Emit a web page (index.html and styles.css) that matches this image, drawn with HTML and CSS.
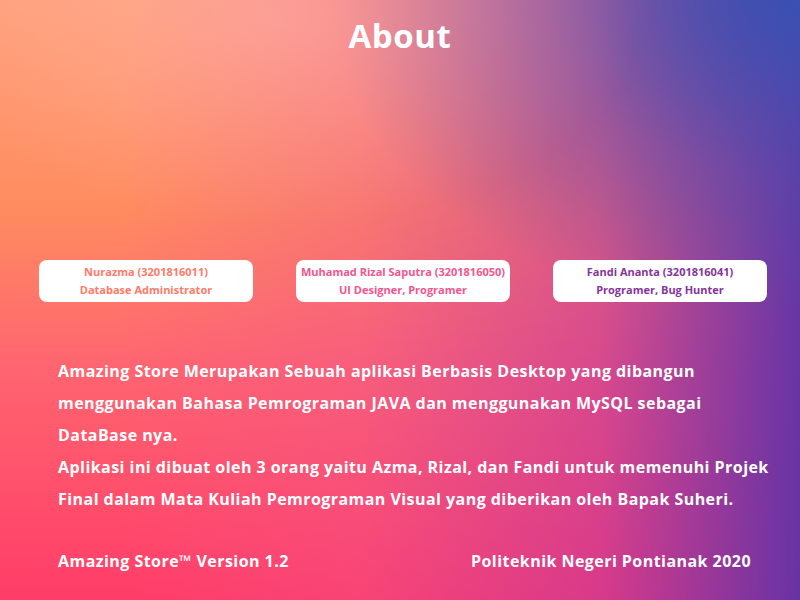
FILE: index.html
```html
<!DOCTYPE html>
<html>
<head>
<meta charset="utf-8">
<link rel="stylesheet" href="styles.css">
</head>
<body>
<div class="page">
  <h1 class="title">About</h1>
  <div class="cards">
    <div class="card card-coral"><div>Nurazma (3201816011)</div><div>Database Administrator</div></div>
    <div class="card card-pink"><div>Muhamad Rizal Saputra (3201816050)</div><div>UI Designer, Programer</div></div>
    <div class="card card-purple"><div>Fandi Ananta (3201816041)</div><div>Programer, Bug Hunter</div></div>
  </div>
  <div class="desc">
    <p>Amazing Store Merupakan Sebuah aplikasi Berbasis Desktop yang dibangun<br>menggunakan Bahasa Pemrograman JAVA dan menggunakan MySQL sebagai<br>DataBase nya.</p>
    <p>Aplikasi ini dibuat oleh 3 orang yaitu Azma, Rizal, dan Fandi untuk memenuhi Projek<br>Final dalam Mata Kuliah Pemrograman Visual yang diberikan oleh Bapak Suheri.</p>
  </div>
  <div class="footer">
    <span>Amazing Store™ Version 1.2</span>
    <span>Politeknik Negeri Pontianak 2020</span>
  </div>
</div>
</body>
</html>
```

FILE: styles.css
```css
html, body {
  margin: 0;
  padding: 0;
}
body {
  width: 800px;
  height: 600px;
  overflow: hidden;
  font-family: "Open Sans", "Noto Sans", sans-serif;
  color: #fff;
}
.page {
  width: 800px;
  height: 600px;
  box-sizing: border-box;
  display: flex;
  flex-direction: column;
  background:
    radial-gradient(ellipse 360px 200px at 35% 4%, rgba(255, 200, 205, 0.3), rgba(255, 200, 205, 0) 100%),
    radial-gradient(ellipse 470px 320px at 100% 0%, rgba(58, 80, 178, 1), rgba(70, 80, 175, 0.4) 55%, rgba(58, 80, 178, 0) 100%),
    linear-gradient(90deg, rgba(240, 80, 140, 0) 15%, rgba(235, 80, 145, 0.35) 45%, rgba(190, 55, 160, 0.6) 75%, rgba(95, 50, 168, 0.95) 100%),
    linear-gradient(180deg, #ffa07a 0%, #ff8c60 35%, #ff6670 60%, #ff3d68 100%);
}
.title {
  margin: 16px 0 0;
  text-align: center;
  font-size: 33px;
  font-weight: 700;
  line-height: 40px;
  letter-spacing: 0.6px;
}
.cards {
  margin-top: 204px;
  padding: 0 33px 0 39px;
  display: flex;
  justify-content: space-between;
}
.card {
  width: 214px;
  height: 42px;
  box-sizing: border-box;
  background: #fff;
  border-radius: 8px;
  display: flex;
  flex-direction: column;
  justify-content: center;
  align-items: center;
  font-size: 11px;
  font-weight: 700;
  line-height: 18px;
}
.card-coral { color: #ff7a68; }
.card-pink { color: #f2558e; }
.card-purple { color: #86349c; }
.desc {
  margin-top: 53px;
  padding: 0 0 0 58px;
  font-size: 16px;
  font-weight: 700;
  line-height: 32px;
  letter-spacing: 0.45px;
  white-space: nowrap;
}
.desc p {
  margin: 0;
}
.footer {
  margin-top: 34px;
  padding: 0 49px 0 58px;
  display: flex;
  justify-content: space-between;
  font-size: 16px;
  font-weight: 700;
  line-height: 24px;
  letter-spacing: 0.45px;
}
```
